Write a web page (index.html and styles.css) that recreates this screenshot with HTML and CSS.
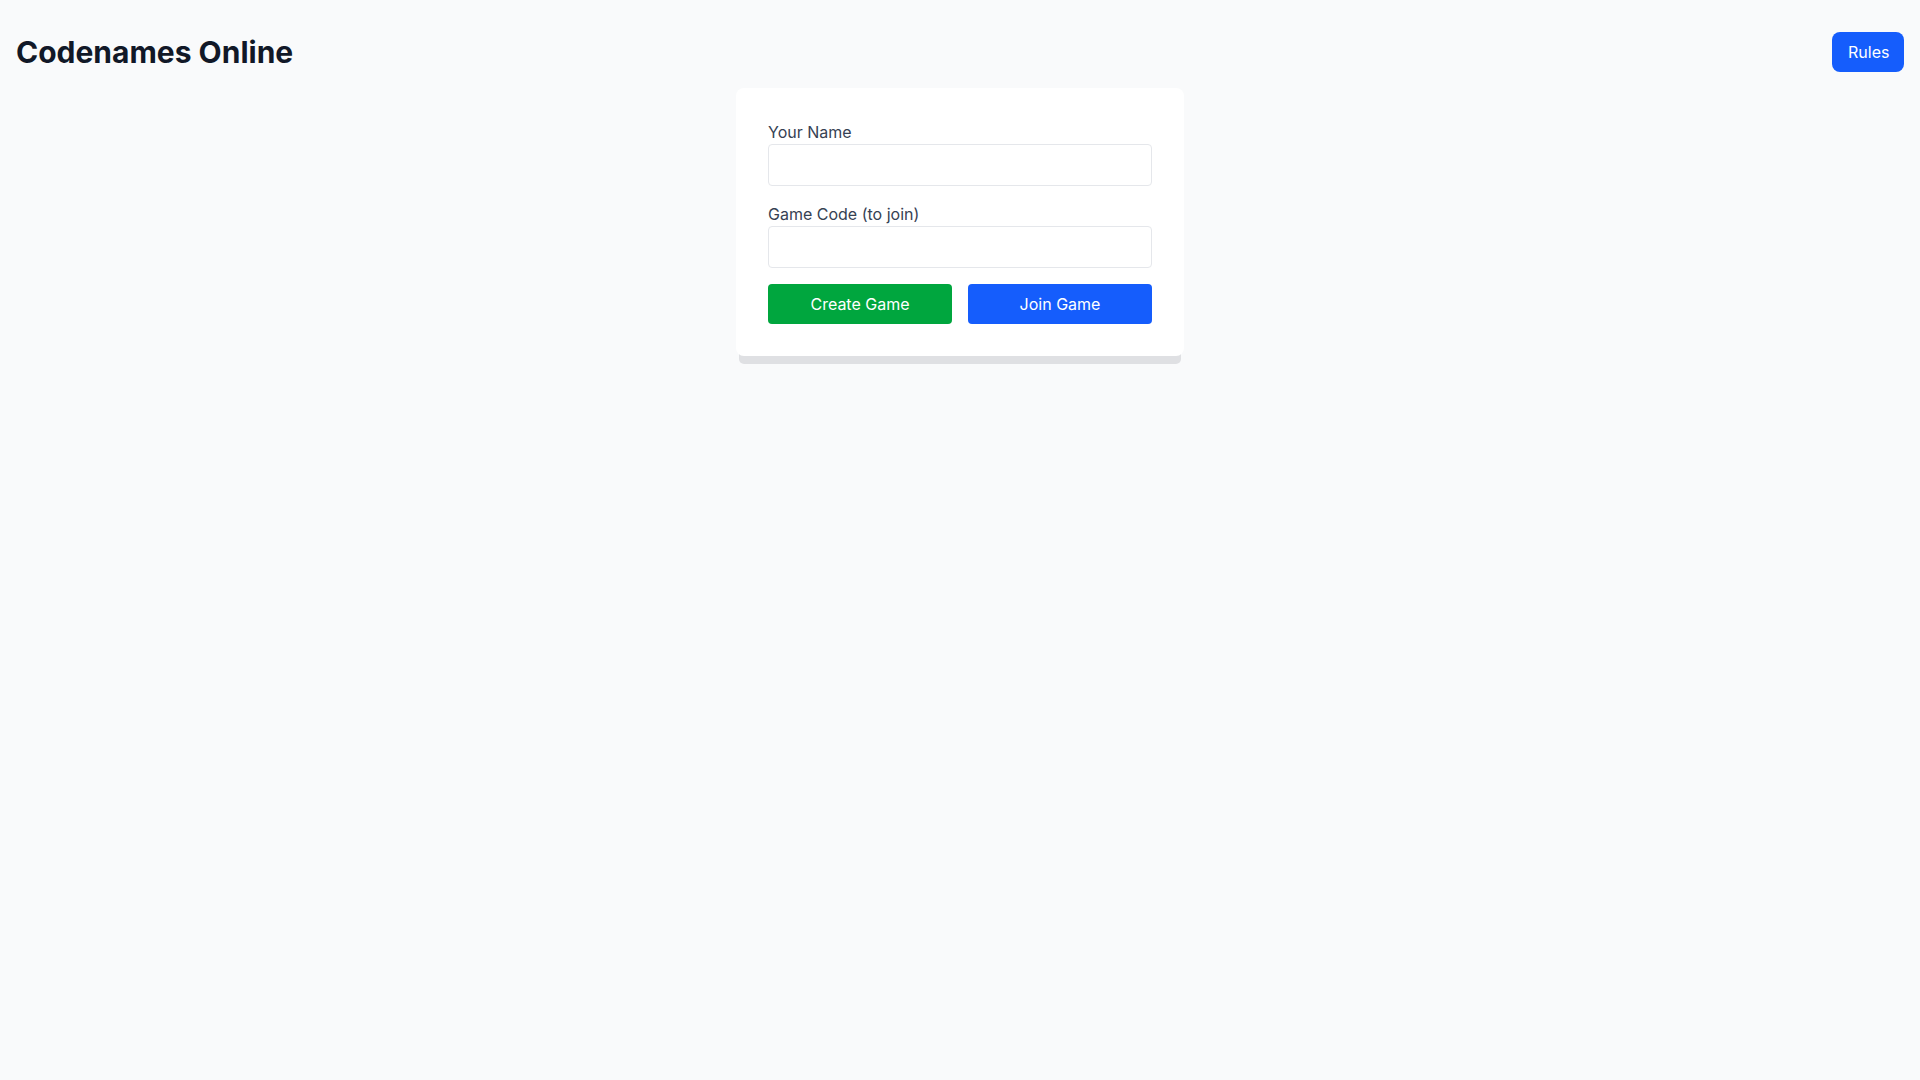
FILE: index.html
```html
<!DOCTYPE html>
<html lang="en">
<head>
<meta charset="utf-8">
<title>Codenames Online</title>
<link rel="stylesheet" href="styles.css">
</head>
<body>
<header class="header">
  <h1 class="title">Codenames Online</h1>
  <button class="btn btn-blue btn-rules">Rules</button>
</header>
<main class="main">
  <div class="card">
    <div class="field">
      <label class="label" for="name">Your Name</label>
      <input class="input" id="name" type="text">
    </div>
    <div class="field">
      <label class="label" for="code">Game Code (to join)</label>
      <input class="input" id="code" type="text">
    </div>
    <div class="actions">
      <button class="btn btn-green">Create Game</button>
      <button class="btn btn-blue">Join Game</button>
    </div>
  </div>
</main>
</body>
</html>
```
FILE: styles.css
```css
* { box-sizing: border-box; }
html, body { margin: 0; padding: 0; }
body {
  background: #f9fafb;
  font-family: Inter, "Noto Sans", sans-serif;
  color: #111827;
  min-height: 100vh;
}
.header {
  display: flex;
  align-items: center;
  justify-content: space-between;
  padding: 32px 16px 16px 16px;
}
.title {
  margin: 0;
  font-size: 30px;
  line-height: 36px;
  font-weight: 700;
  color: #111827;
}
.btn {
  font-family: inherit;
  font-size: 16px;
  line-height: 24px;
  color: #ffffff;
  border: none;
  border-radius: 4px;
  padding: 8px 16px;
  height: 40px;
  cursor: pointer;
}
.btn-rules {
  width: 72px;
  border-radius: 8px;
}
.btn-blue { background: #155dfc; }
.btn-green { background: #00a63e; }
.main {
  display: flex;
  justify-content: center;
}
.card {
  width: 448px;
  background: #ffffff;
  border-radius: 8px;
  padding: 32px;
  box-shadow: 0 11px 0 -3px #dfe0e3;
}
.field {
  display: flex;
  flex-direction: column;
  margin-bottom: 16px;
}
.label {
  font-size: 16px;
  line-height: 24px;
  color: #364153;
}
.input {
  height: 42px;
  border: 1px solid #e5e7eb;
  border-radius: 4px;
  padding: 8px 12px;
  font-family: inherit;
  font-size: 16px;
  background: #ffffff;
  outline: none;
}
.actions {
  display: grid;
  grid-template-columns: 1fr 1fr;
  gap: 16px;
}
```
